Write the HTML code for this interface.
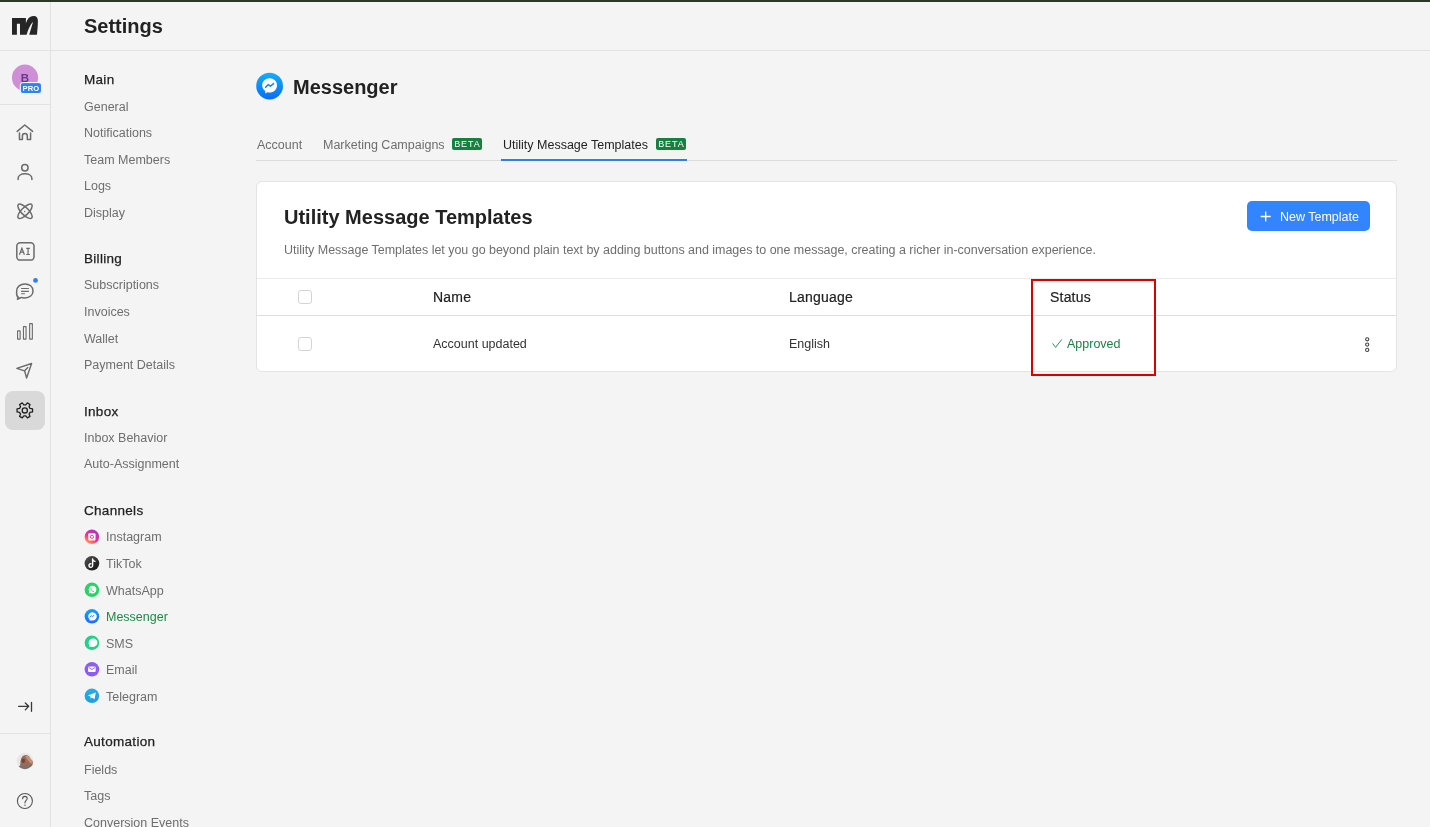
<!DOCTYPE html>
<html><head><meta charset="utf-8">
<style>
*{box-sizing:border-box;margin:0;padding:0}
html,body{will-change:transform;width:1430px;height:827px;overflow:hidden;background:#f4f4f4;font-family:"Liberation Sans",sans-serif;color:#222}
.a{position:absolute;white-space:nowrap}
.topbar{position:absolute;left:0;top:0;width:1430px;height:2px;background:#2b3828}
.vline{position:absolute;left:50px;top:2px;width:1px;height:825px;background:#e2e2e2}
.hline{position:absolute;left:0;top:50px;width:1430px;height:1px;background:#e2e2e2}
.h1{font-size:20px;font-weight:bold;color:#222}
.nh{font-size:13.5px;color:#222;letter-spacing:0.3px;-webkit-text-stroke:0.25px #222}
.ni{font-size:12.5px;color:#6e6e6e}
.tab{font-size:12.5px;color:#6e6e6e;top:138px}
.beta{position:absolute;top:138px;height:12px;width:30px;border-radius:2px;background:#178040;color:#fff;font-size:9px;font-weight:normal;letter-spacing:0.9px;text-indent:0.9px;text-align:center;line-height:13px}
.card{position:absolute;left:256px;top:181px;width:1141px;height:191px;background:#fff;border:1px solid #e3e3e3;border-radius:6px}
.th{top:289px;font-size:14px;letter-spacing:0.2px;color:#222;-webkit-text-stroke:0.2px #222}
.cb{position:absolute;left:298px;width:14px;height:14px;border:1.5px solid #d4d4d4;border-radius:3px;background:#fff}
</style></head><body>
<div class="topbar"></div>
<div class="vline"></div>
<div class="hline"></div>

<!-- rail -->
<svg class="a" style="left:0;top:0" width="51" height="827" viewBox="0 0 51 827">
  <defs>
    <linearGradient id="msg" x1="0" y1="0" x2="0" y2="1"><stop offset="0" stop-color="#0aa3ff"/><stop offset="1" stop-color="#1a6dff"/></linearGradient>
  </defs>
  <!-- logo -->
  <path d="M12 18.1 H25.9 V34.7 H20 V23.7 H16.9 V34.7 H12 Z M25.6 34.7 V24.5 C26.3 21.5 27.8 18.6 30 17.1 C31.5 16.1 33.2 15.8 34.6 16 C36.6 16.4 37.9 18 37.9 20.8 C37.9 25.5 37.4 30.5 36.95 34.7 H29.2 L33.1 21.8 C30.5 24.2 28.3 29 26.6 34.7 Z" fill="#262626"/>
  <!-- avatar -->
  <circle cx="25" cy="77.7" r="13.1" fill="#cf8fd6"/>
  <text x="25" y="81.8" text-anchor="middle" font-family="Liberation Sans" font-weight="bold" font-size="11.5" fill="#6a3694">B</text>
  <rect x="20.3" y="82.6" width="21.2" height="10.9" rx="2.6" fill="#2f80ff" stroke="#fff" stroke-width="1"/>
  <text x="31" y="91.3" text-anchor="middle" font-family="Liberation Sans" font-weight="bold" font-size="7.6" fill="#fff" letter-spacing="0.1">PRO</text>
  <rect x="0" y="104" width="50" height="1" fill="#e2e2e2"/>
  <g fill="none" stroke="#6b6b6b" stroke-width="1.5" stroke-linecap="round" stroke-linejoin="round">
    <!-- home -->
    <path d="M17.2 131.4 L24.75 125 L32.6 131.4"/>
    <path d="M19.45 132.9 V139.45 H22.4 V136 A2.45 2.45 0 0 1 27.3 136 V139.45 H30.6 V132.9"/>
    <!-- person -->
    <circle cx="24.9" cy="167.7" r="3.2"/>
    <path d="M18.1 179.6 V178.6 C18.1 175.8 21 173.8 25 173.8 C29 173.8 31.9 175.8 31.9 178.6 V179.6"/>
    <!-- atom -->
    <ellipse cx="25" cy="211.3" rx="9.5" ry="3.6" transform="rotate(45 25 211.3)"/>
    <ellipse cx="25" cy="211.3" rx="9.5" ry="3.6" transform="rotate(-45 25 211.3)"/>
    <circle cx="24.7" cy="211.5" r="0.7" fill="#6b6b6b" stroke="none"/>
    <!-- AI -->
    <rect x="16.8" y="242.7" width="17.2" height="17.4" rx="3.4"/>
    <!-- chat -->
    <path d="M18.4 297.5 C15.8 295.8 16.7 293.6 16.7 291 C16.7 286.6 20.3 283.9 24.9 283.9 C29.5 283.9 33 286.6 33 290.9 C33 295.2 29.5 297.9 24.9 297.9 C22.9 297.9 21.8 297.4 20.6 297.7 L17.4 299.2 Z"/>
    <!-- chart -->
    <rect x="17.55" y="330.85" width="2.6" height="8.3" rx="0.2" stroke-width="1.1"/>
    <rect x="23.45" y="326.65" width="2.6" height="12.5" rx="0.2" stroke-width="1.1"/>
    <rect x="29.65" y="323.65" width="2.7" height="15.5" rx="0.2" stroke-width="1.1"/>
    <!-- send -->
    <path d="M16.8 368.3 L31.6 363.5 L26.6 378 L24.6 370.8 Z M24.6 370.8 L27.8 367.4" stroke-width="1.4"/>
  </g>
  <g fill="none" stroke="#6b6b6b" stroke-width="1.2">
    <path d="M19.4 254.7 L21.9 248.2 L24.4 254.7 M20.4 252.2 H23.4"/>
    <path d="M26.2 248.4 H29.9 M28.05 248.4 V254.5 M26.2 254.5 H29.9"/>
  </g>
  <g stroke="#6b6b6b" stroke-width="1.1">
    <path d="M21.1 288.5 H28.9 M21.1 291.4 H28.9 M21.1 293.8 H24.9"/>
  </g>
  <circle cx="35.5" cy="280.4" r="2.4" fill="#2a7fff"/>
  <!-- settings selected -->
  <rect x="5" y="391" width="40" height="39" rx="8" fill="#d9d9d9"/>
  <path d="M25.77 404.89 L27.37 402.93 L29.98 404.44 L29.09 406.80 L30.06 408.48 L32.55 408.89 L32.55 411.91 L30.06 412.32 L29.09 414.00 L29.98 416.36 L27.37 417.87 L25.77 415.91 L23.83 415.91 L22.23 417.87 L19.62 416.36 L20.51 414.00 L19.54 412.32 L17.05 411.91 L17.05 408.89 L19.54 408.48 L20.51 406.80 L19.62 404.44 L22.23 402.93 L23.83 404.89 Z" fill="none" stroke="#1f1f1f" stroke-width="1.3" stroke-linejoin="round"/>
  <circle cx="24.8" cy="410.4" r="2.6" fill="none" stroke="#1f1f1f" stroke-width="1.3"/>
  <!-- collapse -->
  <g fill="none" stroke="#3a3a3a" stroke-width="1.3" stroke-linecap="round" stroke-linejoin="round">
    <path d="M18.6 706.3 H28.4 M25.3 703 L28.7 706.3 L25.3 709.9"/>
    <path d="M31.5 702.5 V711.3"/>
  </g>
  <rect x="0" y="733" width="50" height="1" fill="#e2e2e2"/>
  <!-- user avatar -->
  <defs>
    <radialGradient id="face" cx="0.55" cy="0.4" r="0.6"><stop offset="0" stop-color="#c98f70"/><stop offset="0.6" stop-color="#8a5a45"/><stop offset="1" stop-color="#5e4a44"/></radialGradient>
    <clipPath id="avc"><circle cx="25" cy="761" r="8.3"/></clipPath>
  </defs>
  <g clip-path="url(#avc)">
    <rect x="16" y="752" width="18" height="18" fill="#e6e7e7"/>
    <path d="M20 768 L20.5 761 C21 757 23 755 25.5 755 C28 755 29.5 756.5 30 758.5 L33.5 762 L33 766 L28 767 Z" fill="#9c6b57"/>
    <path d="M25 756 C27.5 755.4 29.5 756.5 30.5 758.5 L33.8 762.8 L30.5 763.5 L27 759 Z" fill="#c39178"/>
    <ellipse cx="23.3" cy="760.8" rx="1.8" ry="2.3" fill="#6f4637"/>
    <path d="M16 766.5 C19 765.3 22 766 25 765.8 C28.5 765.5 31 764.8 34 765.3 V770 H16 Z" fill="#77726f"/>
  </g>
  <!-- help -->
  <circle cx="24.9" cy="801" r="7.5" fill="none" stroke="#555" stroke-width="1.1"/>
  <path d="M22.6 798.8 C22.6 797.3 23.6 796.4 24.9 796.4 C26.3 796.4 27.2 797.3 27.2 798.6 C27.2 800.3 25 800.5 25 802.5 V803" fill="none" stroke="#555" stroke-width="1.1" stroke-linecap="round"/>
  <circle cx="25" cy="805.2" r="0.7" fill="#555"/>
</svg>

<div class="a h1" style="left:84px;top:15px">Settings</div>

<!-- settings nav -->
<div class="a nh" style="left:84px;top:72px">Main</div>
<div class="a ni" style="left:84px;top:100px">General</div>
<div class="a ni" style="left:84px;top:126px">Notifications</div>
<div class="a ni" style="left:84px;top:153px">Team Members</div>
<div class="a ni" style="left:84px;top:179px">Logs</div>
<div class="a ni" style="left:84px;top:206px">Display</div>

<div class="a nh" style="left:84px;top:251px">Billing</div>
<div class="a ni" style="left:84px;top:278px">Subscriptions</div>
<div class="a ni" style="left:84px;top:305px">Invoices</div>
<div class="a ni" style="left:84px;top:332px">Wallet</div>
<div class="a ni" style="left:84px;top:358px">Payment Details</div>

<div class="a nh" style="left:84px;top:404px">Inbox</div>
<div class="a ni" style="left:84px;top:431px">Inbox Behavior</div>
<div class="a ni" style="left:84px;top:457px">Auto-Assignment</div>

<div class="a nh" style="left:84px;top:503px">Channels</div>
<div class="a ni" style="left:106px;top:530px">Instagram</div>
<div class="a ni" style="left:106px;top:557px">TikTok</div>
<div class="a ni" style="left:106px;top:584px">WhatsApp</div>
<div class="a ni" style="left:106px;top:610px;color:#1a8a45">Messenger</div>
<div class="a ni" style="left:106px;top:637px">SMS</div>
<div class="a ni" style="left:106px;top:663px">Email</div>
<div class="a ni" style="left:106px;top:690px">Telegram</div>

<div class="a nh" style="left:84px;top:734px">Automation</div>
<div class="a ni" style="left:84px;top:763px">Fields</div>
<div class="a ni" style="left:84px;top:789px">Tags</div>
<div class="a ni" style="left:84px;top:816px">Conversion Events</div>

<!-- channel icons -->
<svg class="a" style="left:80px;top:525px" width="24" height="180" viewBox="80 525 24 180">
  <defs>
    <linearGradient id="ig" x1="0.2" y1="1" x2="0.8" y2="0"><stop offset="0" stop-color="#fdb045"/><stop offset="0.45" stop-color="#f0308a"/><stop offset="1" stop-color="#9b37c9"/></linearGradient>
    <linearGradient id="tt" x1="0" y1="0" x2="1" y2="1"><stop offset="0" stop-color="#555"/><stop offset="1" stop-color="#111"/></linearGradient>
    <linearGradient id="tg" x1="0" y1="0" x2="0" y2="1"><stop offset="0" stop-color="#2aabee"/><stop offset="1" stop-color="#229ed9"/></linearGradient>
  </defs>
  <!-- instagram -->
  <circle cx="91.9" cy="536.8" r="7.3" fill="url(#ig)"/>
  <rect x="88.3" y="533.2" width="7.2" height="7.2" rx="1" fill="#fff"/>
  <circle cx="91.9" cy="536.8" r="1.6" fill="none" stroke="#ec3d7a" stroke-width="1"/>
  <!-- tiktok -->
  <circle cx="91.9" cy="563.3" r="7.3" fill="url(#tt)"/>
  <path d="M92.6 559 V565.6 A1.8 1.8 0 1 1 90.8 563.8 M92.6 559.2 C92.9 560.6 93.8 561.3 95 561.4" fill="none" stroke="#fff" stroke-width="1.4" stroke-linecap="round"/>
  <!-- whatsapp -->
  <circle cx="91.9" cy="589.8" r="7.3" fill="#25d366"/>
  <path d="M88.6 593.5 L89.2 591.6 A3.9 3.9 0 1 1 90.5 592.9 Z" fill="#fff"/>
  <path d="M90.8 588.6 C91 590 92 591.2 93.4 591.5" fill="none" stroke="#25d366" stroke-width="1" stroke-linecap="round"/>
  <!-- messenger -->
  <circle cx="91.9" cy="616.3" r="7.3" fill="url(#msg2)"/>
  <defs><linearGradient id="msg2" x1="0" y1="0" x2="0" y2="1"><stop offset="0" stop-color="#12a4ff"/><stop offset="1" stop-color="#1b6cff"/></linearGradient></defs>
  <path d="M89.5 620.6 V619.3 A4.3 4.1 0 1 1 91.9 620.4 Z" fill="#fff"/>
  <path d="M89.7 617.4 L91.3 615.6 L92.5 616.8 L94.1 615" fill="none" stroke="#1b7dff" stroke-width="0.9" stroke-linejoin="round"/>
  <!-- sms -->
  <circle cx="91.9" cy="642.8" r="7.3" fill="#26cf8a"/>
  <path d="M89.2 647 L89.6 645.3 A4.4 4.2 0 1 1 91 646.4 Z" fill="#fff"/>
  <!-- email -->
  <circle cx="91.9" cy="669.3" r="7.3" fill="#8b5cf6"/>
  <rect x="88.1" y="666.5" width="7.6" height="5.6" rx="1" fill="#fff"/>
  <path d="M88.6 667.3 L91.9 669.6 L95.2 667.3" fill="none" stroke="#8b5cf6" stroke-width="0.9"/>
  <!-- telegram -->
  <circle cx="91.9" cy="695.8" r="7.3" fill="url(#tg)"/>
  <path d="M87.8 695.6 L95.8 692.4 L94.5 699.3 L91.9 697.4 L90.6 698.8 L90.5 696.6 Z" fill="#fff"/>
</svg>

<!-- main header -->
<svg class="a" style="left:256px;top:72px" width="28" height="28" viewBox="0 0 28 28">
  <defs><linearGradient id="mg" x1="0" y1="0" x2="0" y2="1"><stop offset="0" stop-color="#0fb0ff"/><stop offset="1" stop-color="#0a6cf5"/></linearGradient></defs>
  <circle cx="13.6" cy="14.1" r="13.4" fill="url(#mg)"/>
  <path d="M9.3 21.6 V19 C7.4 17.6 6.2 15.6 6.2 13.4 C6.2 9.3 9.5 6.3 13.6 6.3 C17.7 6.3 21 9.3 21 13.4 C21 17.5 17.7 20.5 13.6 20.5 C12.8 20.5 12.1 20.4 11.4 20.2 Z" fill="#fff"/>
  <path d="M9.6 15.3 L12.3 12.5 L14.4 14.3 L17.5 11.6" fill="none" stroke="#1d7bff" stroke-width="1.5" stroke-linejoin="round" stroke-linecap="round"/>
</svg>
<div class="a h1" style="left:293px;top:76px">Messenger</div>

<!-- tabs -->
<div class="a tab" style="left:257px">Account</div>
<div class="a tab" style="left:323px">Marketing Campaigns</div>
<div class="beta" style="left:452px">BETA</div>
<div class="a tab" style="left:503px;color:#222">Utility Message Templates</div>
<div class="beta" style="left:656px">BETA</div>
<div class="a" style="left:256px;top:160px;width:1141px;height:1px;background:#dcdcdc"></div>
<div class="a" style="left:501px;top:159px;width:186px;height:2px;background:#2f80ed"></div>

<!-- card -->
<div class="card"></div>
<div class="a h1" style="left:284px;top:206px">Utility Message Templates</div>
<div class="a ni" style="left:284px;top:243px;letter-spacing:-0.03px">Utility Message Templates let you go beyond plain text by adding buttons and images to one message, creating a richer in-conversation experience.</div>
<div class="a" style="left:1247px;top:201px;width:123px;height:30px;background:#3385ff;border-radius:5px"></div>
<svg class="a" style="left:1259px;top:210px" width="14" height="14" viewBox="0 0 14 14"><path d="M6.7 1.5 V11.5 M1.7 6.5 H11.7" stroke="#fff" stroke-width="1.3"/></svg>
<div class="a" style="left:1280px;top:210px;font-size:12.5px;color:#fff">New Template</div>

<div class="a" style="left:257px;top:278px;width:1139px;height:1px;background:#ebebeb"></div>
<div class="a" style="left:257px;top:315px;width:1139px;height:1px;background:#dedede"></div>
<div class="cb" style="top:289.5px"></div>
<div class="cb" style="top:336.5px"></div>
<div class="a th" style="left:433px">Name</div>
<div class="a th" style="left:789px">Language</div>
<div class="a th" style="left:1050px">Status</div>
<div class="a" style="left:433px;top:337px;font-size:12.5px;color:#333">Account updated</div>
<div class="a" style="left:789px;top:337px;font-size:12.5px;color:#333">English</div>
<svg class="a" style="left:1050px;top:336px" width="14" height="14" viewBox="0 0 14 14"><path d="M2.6 7.4 L5.6 11.4 L11.8 3.4" fill="none" stroke="#1d8043" stroke-width="0.9"/></svg>
<div class="a" style="left:1067px;top:337px;font-size:12.5px;color:#1d8043">Approved</div>
<svg class="a" style="left:1362px;top:334px" width="10" height="20" viewBox="0 0 10 20">
  <g fill="none" stroke="#444" stroke-width="1.1"><circle cx="5.2" cy="5.3" r="1.6"/><circle cx="5.2" cy="10.6" r="1.6"/><circle cx="5.2" cy="15.9" r="1.6"/></g>
</svg>

<!-- red highlight -->
<div class="a" style="left:1031px;top:279px;width:125px;height:97px;border:2px solid #d60000"></div>

</body></html>
